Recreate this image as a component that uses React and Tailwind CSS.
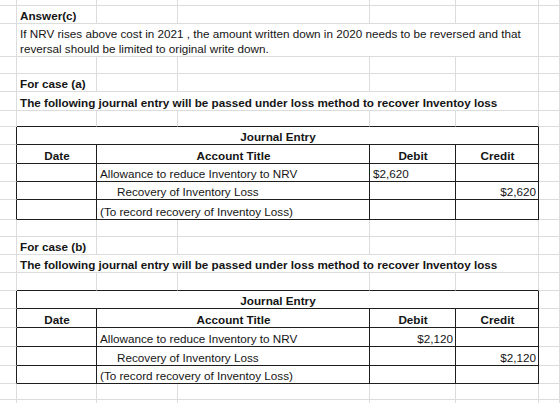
import clsx from "clsx";

const SPAN = { 1: "col-span-1", 2: "col-span-2", 5: "col-span-5" };

function Cell({ span = 1, bb, br, wrap, className, children }) {
  return (
    <div
      className={clsx(
        "flex items-end min-w-0 border-r border-b pl-[3px] pr-[2px]",
        wrap ? "whitespace-normal" : "whitespace-nowrap",
        SPAN[span],
        bb ? "border-b-[#1e1e1e]" : "border-b-[#dcdcdc]",
        br ? "border-r-[#1e1e1e]" : "border-r-[#dcdcdc]",
        className
      )}
    >
      {children}
    </div>
  );
}

function Row({ h, edge, children }) {
  return (
    <div className={clsx("grid grid-cols-[17px_80px_81px_192px_86px_83px_1fr]", h)}>
      <Cell br={edge} />
      {children}
      <Cell />
    </div>
  );
}

function Blanks({ bb }) {
  return (
    <>
      <Cell bb={bb} />
      <Cell bb={bb} />
      <Cell bb={bb} />
      <Cell bb={bb} />
      <Cell bb={bb} />
    </>
  );
}

function JournalTable({ amount, debitRight, heights }) {
  const rows = [
    { title: "Allowance to reduce Inventory to NRV", debit: amount },
    { title: "Recovery of Inventory Loss", credit: amount, indent: true },
    { title: "(To record recovery of Inventoy Loss)" },
  ];
  return (
    <>
      <Row h={heights[0]} edge>
        <Cell span={5} bb br className="justify-center font-bold">
          Journal Entry
        </Cell>
      </Row>
      <Row h={heights[1]} edge>
        <Cell bb br className="justify-center font-bold">
          Date
        </Cell>
        <Cell span={2} bb br className="justify-center font-bold">
          Account Title
        </Cell>
        <Cell bb br className="justify-center font-bold">
          Debit
        </Cell>
        <Cell bb br className="justify-center font-bold">
          Credit
        </Cell>
      </Row>
      {rows.map((r, i) => (
        <Row key={i} h={heights[i + 2]} edge>
          <Cell bb br />
          <Cell span={2} bb br className={r.indent ? "pl-[20px]" : ""}>
            {r.title}
          </Cell>
          <Cell bb br className={debitRight ? "justify-end" : ""}>
            {r.debit}
          </Cell>
          <Cell bb br className="justify-end">
            {r.credit}
          </Cell>
        </Row>
      ))}
    </>
  );
}

export default function App() {
  return (
    <div className="w-[560px] h-[403px] overflow-hidden bg-white text-[#151515] text-[11.7px] leading-[14px] font-['Liberation_Sans',Arial,sans-serif]">
      <Row h="h-[6px]">
        <Blanks />
      </Row>
      <Row h="h-[18px]">
        <Cell className="font-bold">Answer(c)</Cell>
        <Cell />
        <Cell />
        <Cell />
        <Cell />
      </Row>
      <Row h="h-[33px]">
        <Cell span={5} wrap className="leading-[15px]">
          <span>
            If NRV rises above cost in 2021 , the amount written down in 2020 needs to be reversed and that
            reversal should be limited to original write down.
          </span>
        </Cell>
      </Row>
      <Row h="h-[17px]">
        <Blanks />
      </Row>
      <Row h="h-[18px]">
        <Cell className="font-bold">For case (a)</Cell>
        <Cell />
        <Cell />
        <Cell />
        <Cell />
      </Row>
      <Row h="h-[19px]">
        <Cell span={5} className="font-bold">
          The following journal entry will be passed under loss method to recover Inventoy loss
        </Cell>
      </Row>
      <Row h="h-[16px]">
        <Blanks bb />
      </Row>
      <JournalTable
        amount="$2,620"
        heights={["h-[18px]", "h-[19px]", "h-[18px]", "h-[18px]", "h-[20px]"]}
      />
      <Row h="h-[17px]">
        <Blanks />
      </Row>
      <Row h="h-[18px]">
        <Cell className="font-bold">For case (b)</Cell>
        <Cell />
        <Cell />
        <Cell />
        <Cell />
      </Row>
      <Row h="h-[18px]">
        <Cell span={5} className="font-bold">
          The following journal entry will be passed under loss method to recover Inventoy loss
        </Cell>
      </Row>
      <Row h="h-[18px]">
        <Blanks bb />
      </Row>
      <JournalTable
        amount="$2,120"
        debitRight
        heights={["h-[18px]", "h-[19px]", "h-[19px]", "h-[19px]", "h-[18px]"]}
      />
      <Row h="h-[16px]">
        <Blanks />
      </Row>
      <Row h="h-[18px]">
        <Blanks />
      </Row>
    </div>
  );
}
